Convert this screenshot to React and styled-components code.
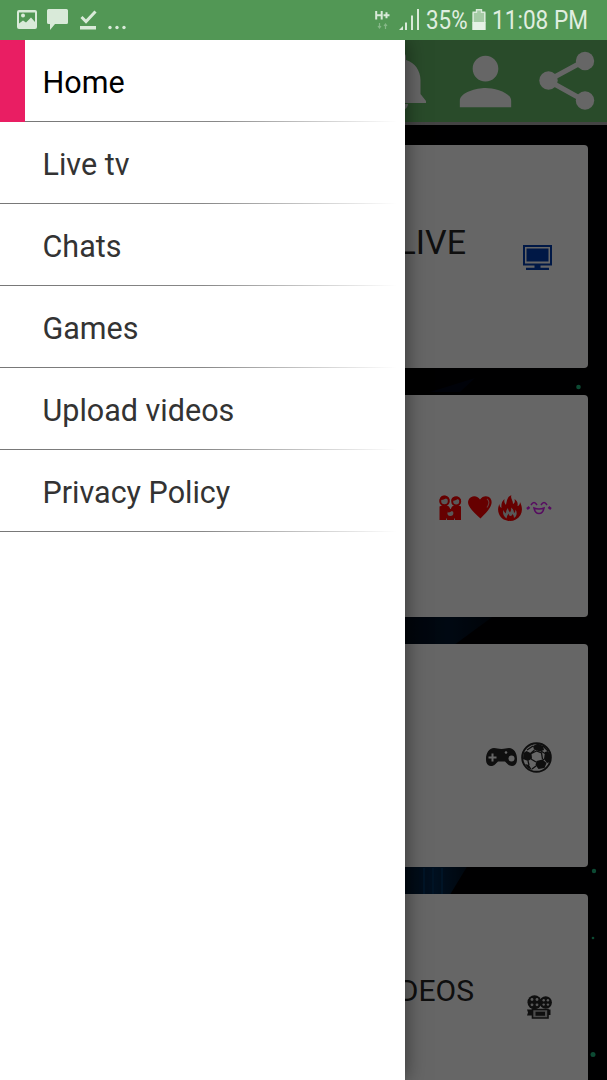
import React from "react";
import styled, { createGlobalStyle } from "styled-components";
import { MdPerson } from "react-icons/md";

const menuItems = [
  "Home",
  "Live tv",
  "Chats",
  "Games",
  "Upload videos",
  "Privacy Policy",
];

const App = () => {
  return (
    <Screen>
      <GlobalStyle />
      <StatusBar>
        <StatusGroup>
          <PictureIcon />
          <MessageIcon />
          <DoneIcon />
          <MoreIcon />
        </StatusGroup>
        <StatusGroup>
          <NetworkIcon />
          <SignalIcon />
          <StatusText $width={41} $left={7} $scale={0.86}>
            35%
          </StatusText>
          <BatteryIcon />
          <StatusText $width={96} $left={6} $scale={0.87}>
            11:08 PM
          </StatusText>
        </StatusGroup>
      </StatusBar>
      <Body>
        <Page>
          <Stars />
          <AppBar>
            <BellIcon />
            <MdPerson size={77} />
            <ShareIcon />
          </AppBar>
          <CardList>
            <Card>
              <Title $size={34} $gap={57}>
                LIVE
              </Title>
              <TvIcon />
            </Card>
            <Card>
              <FamilyIcon />
              <HeartIcon />
              <FireIcon />
              <LaughIcon />
            </Card>
            <Card>
              <GamepadIcon />
              <BallIcon />
            </Card>
            <Card>
              <Title $size={30} $gap={53}>
                VIDEOS
              </Title>
              <CameraIcon />
            </Card>
          </CardList>
        </Page>
        <Scrim />
        <Drawer>
          {menuItems.map((item, index) => (
            <MenuItem key={item} $active={index === 0}>
              {item}
            </MenuItem>
          ))}
        </Drawer>
      </Body>
    </Screen>
  );
};

export default App;

const PictureIcon = () => (
  <svg width="20" height="19" viewBox="0 0 20 19">
    <path
      fill="#d9ead9"
      fillRule="evenodd"
      d="M2 0h16a2 2 0 0 1 2 2v15a2 2 0 0 1-2 2H2a2 2 0 0 1-2-2V2a2 2 0 0 1 2-2zM2 2.5v11l4-3 3 2 5-5 4 4.500V2.500zM6 3.500a2 2 0 1 1 0 4 2 2 0 0 1 0-4z"
    />
  </svg>
);

const MessageIcon = () => (
  <Spaced width="21" height="21" viewBox="0 0 21 21" $left={10}>
    <path
      fill="#d9ead9"
      d="M1.500 0h18A1.500 1.500 0 0 1 21 1.500v12a1.500 1.500 0 0 1-1.500 1.500H8l-5 6v-6H1.500A1.500 1.500 0 0 1 0 13.500v-12A1.500 1.500 0 0 1 1.500 0z"
    />
  </Spaced>
);

const DoneIcon = () => (
  <Spaced width="17" height="20" viewBox="0 0 17 20" $left={12}>
    <path d="M1.500 7l4.500 4.500L15.500 1.500" fill="none" stroke="#d9ead9" strokeWidth="3" />
    <path d="M0 16h16v3.500H0z" fill="#d9ead9" />
  </Spaced>
);

const MoreIcon = () => (
  <Spaced width="18" height="20" viewBox="0 0 18 20" $left={11} fill="#d9ead9">
    <circle cx="2" cy="17.500" r="1.700" />
    <circle cx="9" cy="17.500" r="1.700" />
    <circle cx="16" cy="17.500" r="1.700" />
  </Spaced>
);

const NetworkIcon = () => (
  <svg width="15" height="20" viewBox="0 0 15 20" fill="none">
    <path
      d="M1.200 1v8.500M6.700 1v8.500M1.200 5.200h5.500M8.500 5.200h6M11.500 2.200v6"
      stroke="#d9ead9"
      strokeWidth="2"
    />
    <path
      d="M4.500 13v5M3 16l1.500 2 1.500-2M10.500 19v-5M9 16l1.500-2 1.500 2"
      stroke="#86b788"
      strokeWidth="1.200"
    />
  </svg>
);

const SignalIcon = () => (
  <Spaced width="20" height="21" viewBox="0 0 20 21" $left={9} fill="#d9ead9">
    <path d="M0 21l4-4v4zM6 13.500h2V21H6zM12 6.500h2V21h-2zM18 0h2v21h-2z" />
  </Spaced>
);

const BatteryIcon = () => (
  <Spaced width="14" height="21" viewBox="0 0 14 21" $left={5}>
    <path d="M4 0h6v3h2.500a1 1 0 0 1 1 1v10H.500V4a1 1 0 0 1 1-1H4z" fill="#a5cba5" />
    <path
      d="M4.500.700h5v2.500h3.200V20.300H1.200V3.200h3.300z"
      fill="none"
      stroke="#d9ead9"
      strokeWidth="1.400"
    />
    <path d="M.500 13h13v8H.500z" fill="#e6f2e6" />
  </Spaced>
);

const BellIcon = () => (
  <svg width="77" height="77" viewBox="0 0 77 77" fill="currentColor">
    <path d="M33 14a4 4 0 0 1 8 0v3c9 2.500 14.500 11 14.500 20v14l5.500 7v2H13v-2l5.500-7V37c0-9 5.500-17.500 14.500-20zM31 61h12a6 6 0 0 1-12 0z" />
  </svg>
);

const ShareIcon = () => (
  <svg width="77" height="77" viewBox="0 0 77 77" fill="currentColor">
    <path d="M55 18L19 37.500 55 57.500" fill="none" stroke="currentColor" strokeWidth="5" />
    <circle cx="56" cy="18" r="9.200" />
    <circle cx="19.500" cy="37.500" r="9.200" />
    <circle cx="56" cy="57.500" r="9.200" />
  </svg>
);

const TvIcon = () => (
  <svg width="29" height="25" viewBox="0 0 29 25" fill="#003cb0">
    <path fillRule="evenodd" d="M0 0h29v20.500H0zM2 2v16.500h25V2z" />
    <path d="M3.500 3.500h22V16.500h-22zM11.500 20h6v3h-6zM3 22.800h23V25H3z" />
  </svg>
);

const FamilyIcon = () => (
  <svg width="23" height="25" viewBox="0 0 23 25">
    <path d="M.500 11.500q5-3 9.500 0l1.500 3 1.500-3q4.500-3 9 0V25H.500z" fill="#ff0000" />
    <g fill="#ddd" stroke="#ff0000">
      <circle cx="5.500" cy="6" r="4.300" strokeWidth="2" />
      <circle cx="17.200" cy="6.500" r="4" strokeWidth="2" />
    </g>
    <circle cx="11.400" cy="18" r="3" fill="#ddd" />
    <path
      d="M.800 5C1 1 4 0 6.500.500 9 1 10.500 3 10.500 5L7 3.500Q4 5 .800 5zM12.500 6C12 3 14 1.500 17 1.500c3 0 5 2 5 4.500l-3-2q-3 2-6.500 2zM8 17.500q.500-3.500 3.500-3.500t3.500 3.500l-2-1.500q-2 1.500-5 1.500z"
      fill="#ff0000"
    />
    <path d="M7.500 25v-1.500M15.500 25v-1.500" stroke="#ddd" />
  </svg>
);

const HeartIcon = () => (
  <Spaced width="24" height="23" viewBox="0 0 24 23" $left={6}>
    <path
      fill="#ff0000"
      d="M12 3.500C14.500-.500 20-1 22.500 2.500 26 8 21 14 12.500 22.500 3 14-1.500 9 .500 4 3-1.500 10-.500 12 3.500z"
    />
    <path d="M19 3c2.500 1.500 2.500 5 0 8.500" fill="none" stroke="#f99" strokeWidth="1.200" />
  </Spaced>
);

const FireIcon = () => (
  <Spaced width="24" height="26" viewBox="0 0 24 26" $left={6}>
    <path
      fill="#ff0000"
      d="M13.500 0C12 3 15 5 15 9c2-1 2-3 1.500-5 3 2 3.500 4 3 7 1.500 0 2.500-2 2.500-4 2.500 5 2.500 9 .500 13C20 24 16 26 12 26S3 24 1 19C-.500 15 0 12 1.500 9c0 2 .500 3 2 4C3 9 4 6 6.500 4c-.500 3 0 4 1.500 6 1-4 1-8 5.500-10z"
    />
    <path
      fill="#ddd"
      d="M8.500 23.500C5 21 4.500 18 5.500 15q.500 2.500 2.500 3.500c0-2 .500-4 2-5.500 0 2 1 3 2 4.500 1-1.500 1.500-3 1-5 2 1.500 3 3 3 5.500 1-.500 1.500-2 1.500-3.500 2 3 1.500 6.500-1.500 8.500q0-2.500-1.500-4-.500 2-2 2t-2-2.500q-1.500 2-2 5z"
    />
  </Spaced>
);

const LaughIcon = () => (
  <Spaced width="26" height="14" viewBox="0 0 26 14" $left={4} fill="none" stroke="#d81ff0" strokeWidth="1.500">
    <path d="M5 4q3-5 6 0M15 4q3-5 6 0M8 7q5 2 10 0-1 5.500-5 5.500T8 7z" />
    <path d="M3.500 6L1 8M22.500 6L25 8" strokeWidth="2.500" />
  </Spaced>
);

const GamepadIcon = () => (
  <svg width="31" height="18" viewBox="0 0 31 18">
    <path
      fill="#262626"
      d="M8 0c3 0 4 1 7.500 1S20 0 23 0c5 0 8 5 8 11 0 5-2 7-5 7-4 0-5-3-7-4.500h-7C10 15 9 18 5 18c-3 0-5-2-5-7C0 5 3 0 8 0z"
    />
    <path d="M6.500 5.500v8M2.500 9.500h8" stroke="#fff" strokeWidth="2" />
    <circle cx="20" cy="4.500" r="1.300" fill="#fff" />
    <circle cx="25.500" cy="10.500" r="3" fill="#fff" />
  </svg>
);

const BallIcon = () => (
  <Spaced width="31" height="31" viewBox="0 0 31 31" $left={4}>
    <circle cx="15.500" cy="15.500" r="14.300" fill="#fff" stroke="#262626" strokeWidth="2" />
    <g fill="#262626">
      <path d="M12 4l5-2.500 5 2.500 1 4-4 1.500-6-2zM2.500 11l3-2 5 2.500.500 5L7 19l-5-2zM24 10l3-1 3 5-1 6-3 1-3-4zM15.500 19l6-1.500 4 3.500-2 5-6 1-3-4z" />
      <path d="M4 22l4 1 3 5-4-2z" />
    </g>
    <path
      d="M13.500 8l-4 3.500M20 9l4 2.500M23.500 17l-2 1M10 17l5 3M12 4L6 8M22 4l5 5M7 19l1 4M15 24l-4 3M10.500 11.500l5-2.500 5 2 1 6"
      fill="none"
      stroke="#262626"
      strokeWidth="1.300"
    />
  </Spaced>
);

const CameraIcon = () => (
  <svg width="25" height="24" viewBox="0 0 25 24">
    <circle cx="7.500" cy="7.200" r="7" fill="#262626" />
    <circle cx="18.700" cy="7.500" r="6.200" fill="#262626" />
    <g fill="#ddd">
      <circle cx="5" cy="4.500" r="1.400" />
      <circle cx="10" cy="4.500" r="1.400" />
      <circle cx="5" cy="9.800" r="1.400" />
      <circle cx="10" cy="9.800" r="1.400" />
      <circle cx="16.700" cy="5.300" r="1.200" />
      <circle cx="20.900" cy="5.300" r="1.200" />
      <circle cx="16.700" cy="9.600" r="1.200" />
      <circle cx="20.900" cy="9.600" r="1.200" />
    </g>
    <path d="M5.500 14.500h15.500v8.500H5.500z" fill="#bbb" stroke="#262626" strokeWidth="1.600" />
    <path d="M0 14.500h5v6H0l1-3zM8.500 16.800h9.500v4H8.500zM21 14.500h2.500V20H21z" fill="#262626" />
  </svg>
);

const Stars = () => (
  <Backdrop width="607" height="1040" viewBox="0 0 607 1040">
    <defs>
      <linearGradient id="glow" x1="0" x2="1">
        <stop offset="0" stopColor="#001428" />
        <stop offset=".5" stopColor="#002850" />
        <stop offset="1" stopColor="#001020" />
      </linearGradient>
    </defs>
    <path d="M400 575h95l-45 33h-50z" fill="url(#glow)" opacity=".55" />
    <path d="M400 825h68l-20 33h-48z" fill="url(#glow)" />
    <path d="M424 828v27M433 828v27M442 828v27" stroke="#003260" strokeWidth="2" />
    <path d="M430 352l45-14-15 14z" fill="#000618" />
    <g fill="#20b880">
      <circle cx="578.500" cy="347" r="2.300" />
      <circle cx="594" cy="831" r="2.200" />
      <circle cx="593" cy="898" r="1.300" />
      <circle cx="593" cy="1014.500" r="2.500" />
    </g>
  </Backdrop>
);

const GlobalStyle = createGlobalStyle`
  body {
    margin: 0;
    font-family: Roboto, "Liberation Sans", sans-serif;
  }

  svg {
    display: block;
    flex: none;
  }
`;

const Screen = styled.div`
  display: flex;
  flex-direction: column;
  width: 607px;
  height: 1080px;
  overflow: hidden;
`;

const StatusBar = styled.header`
  display: flex;
  justify-content: space-between;
  flex: none;
  box-sizing: border-box;
  height: 40px;
  padding: 0 19px 1px 17px;
  background: #529755;
`;

const StatusGroup = styled.div`
  display: flex;
  align-items: center;
`;

const Spaced = styled.svg`
  margin-left: ${(props) => props.$left}px;
`;

const StatusText = styled.span`
  width: ${(props) => props.$width}px;
  margin-left: ${(props) => props.$left}px;
  color: #e0eee0;
  font-size: 26px;
  white-space: nowrap;
  transform: scaleX(${(props) => props.$scale});
  transform-origin: left;
`;

const Body = styled.main`
  position: relative;
  flex: 1;
  overflow: hidden;
`;

const Page = styled.div`
  height: 1040px;
  background: #000004;
`;

const Backdrop = styled.svg`
  position: absolute;
  top: 0;
  left: 0;
`;

const AppBar = styled.div`
  position: relative;
  display: flex;
  align-items: center;
  justify-content: flex-end;
  gap: 5px;
  box-sizing: border-box;
  height: 85px;
  padding-right: 1px;
  background: #66bb6a;
  border-bottom: 3px solid #aaa;
  color: white;
`;

const CardList = styled.div`
  position: relative;
  display: flex;
  flex-direction: column;
  gap: 27px;
  padding: 20px 19px 0;
`;

const Card = styled.div`
  display: flex;
  align-items: center;
  justify-content: flex-end;
  flex: none;
  box-sizing: border-box;
  height: 222.700px;
  padding: 3px 36px 0 0;
  background: white;
  border-radius: 4px;
`;

const Title = styled.h2`
  margin: 0 ${(props) => props.$gap}px 32px 0;
  color: #262626;
  font-size: ${(props) => props.$size}px;
  font-weight: 400;
`;

const Scrim = styled.div`
  position: absolute;
  inset: 0;
  background: rgba(0, 0, 0, 0.6);
`;

const Drawer = styled.nav`
  position: absolute;
  top: 0;
  bottom: 0;
  left: 0;
  width: 405px;
  background: white;
  box-shadow: 0 0 20px rgba(0, 0, 0, 0.5);
`;

const MenuItem = styled.div`
  display: flex;
  align-items: center;
  box-sizing: border-box;
  height: 82px;
  padding: 2px 0 0 ${(props) => (props.$active ? 17.5 : 42.5)}px;
  border-left: ${(props) => (props.$active ? "25px solid #e91e63" : "none")};
  background: linear-gradient(to right, #777, #888 50%, #fff 98%) bottom / 100%
    1px no-repeat;
  color: ${(props) => (props.$active ? "#000" : "#333")};
  font-size: 30.500px;
`;
